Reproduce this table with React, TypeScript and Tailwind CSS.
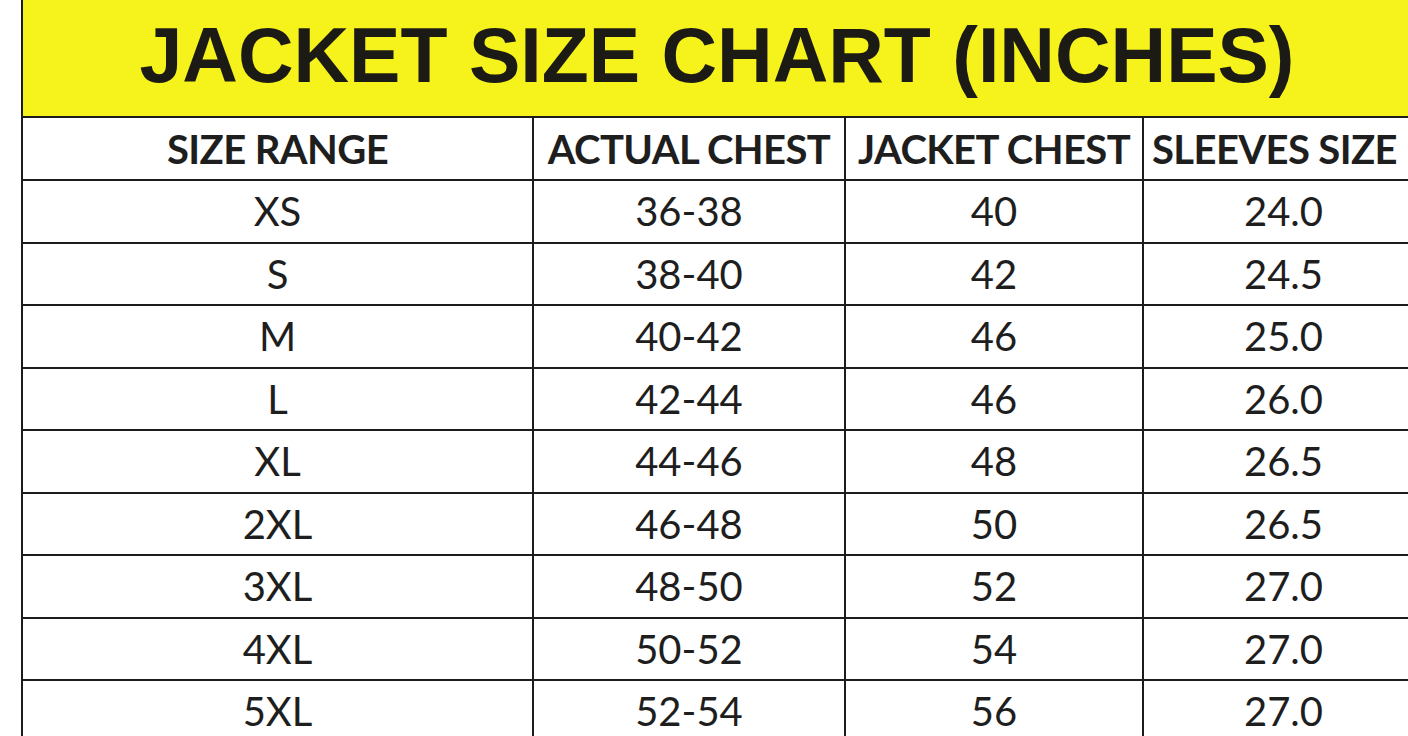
import React from 'react';

const rows: [string, string, string, string][] = [
  ['XS', '36-38', '40', '24.0'],
  ['S', '38-40', '42', '24.5'],
  ['M', '40-42', '46', '25.0'],
  ['L', '42-44', '46', '26.0'],
  ['XL', '44-46', '48', '26.5'],
  ['2XL', '46-48', '50', '26.5'],
  ['3XL', '48-50', '52', '27.0'],
  ['4XL', '50-52', '54', '27.0'],
  ['5XL', '52-54', '56', '27.0'],
];

const headers = ['SIZE RANGE', 'ACTUAL CHEST', 'JACKET CHEST', 'SLEEVES SIZE'];

export default function App() {
  return (
    <div className="w-[1408px] h-[736px] overflow-hidden bg-white pl-[21px]">
      <div className="w-[1400px]">
        {/* Title banner */}
        <div className="h-[118px] bg-[#f6f21c] border-l-2 border-b-2 border-[#1c1c1c] flex items-start justify-center pt-[5px] pr-[10px]">
          <h1 className="text-[77px] leading-[100px] font-bold text-[#1c1a14] font-['Liberation_Sans',Arial,sans-serif] whitespace-nowrap">
            JACKET SIZE CHART (INCHES)
          </h1>
        </div>

        {/* Table */}
        <div className="font-['Lato','Open_Sans',sans-serif] text-[#1e1e1e] border-l-2 border-[#1c1c1c]">
          <div className="grid grid-cols-[511px_312px_298px_279px] h-[63px] border-b-2 border-[#1c1c1c]">
            {headers.map((h, i) => (
              <div
                key={h}
                className={`flex items-center justify-center text-[40px] font-bold whitespace-nowrap tracking-[-0.6px] ${i < 3 ? 'border-r-2 border-[#1c1c1c]' : 'justify-start pl-[8px]'}`}
              >
                {h}
              </div>
            ))}
          </div>
          {rows.map((r) => (
            <div key={r[0]} className="grid grid-cols-[511px_312px_298px_279px] h-[62.5px] border-b-2 border-[#1c1c1c]">
              {r.map((c, i) => (
                <div
                  key={i}
                  className={`flex items-center justify-center text-[40px] whitespace-nowrap ${i < 3 ? 'border-r-2 border-[#1c1c1c]' : ''}`}
                >
                  {c}
                </div>
              ))}
            </div>
          ))}
        </div>
      </div>
    </div>
  );
}
